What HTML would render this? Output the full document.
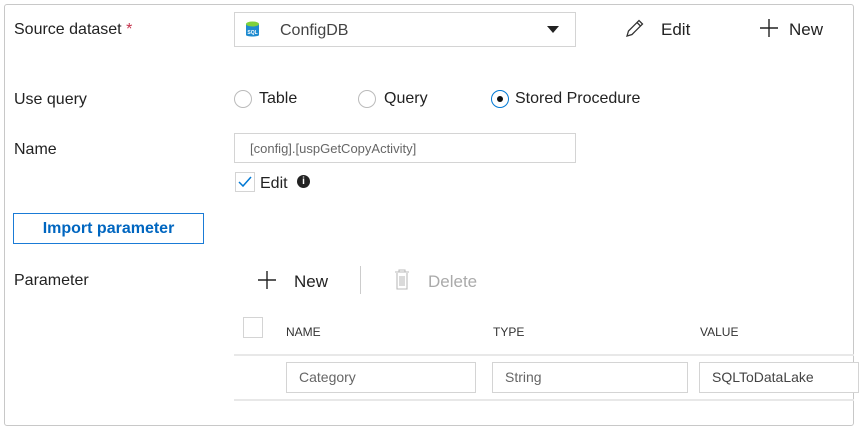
<!DOCTYPE html>
<html><head><style>
body{margin:0;width:861px;height:407px;background:#fff;font-family:"Liberation Sans",sans-serif;color:#222;position:relative;overflow:hidden}
.a{position:absolute;white-space:nowrap}
.frame{position:absolute;left:4px;top:4px;width:848px;height:420px;border:1px solid #c8c8c8;border-radius:3px}
.lbl{font-size:16px;line-height:20px}
.box{position:absolute;border:1px solid #d4d4d4;background:#fff;box-sizing:border-box}
.radio{position:absolute;width:18px;height:18px;border:1px solid #bbb;border-radius:50%;box-sizing:border-box}
.hdr{font-size:12px;color:#333}
.cell{font-size:14px;color:#666;padding-left:12px;line-height:29px}
</style></head><body>
<div class="frame"></div>
<div class="a lbl" style="left:14px;top:20px">Source dataset <span style="color:#c4314b">*</span></div>
<div class="box" style="left:234px;top:12px;width:342px;height:35px"></div>
<svg class="a" style="left:245px;top:20px" width="15" height="19" viewBox="0 0 15 19"><path d="M1 4v11c0 2 13 2 13 0V4z" fill="#1e8bd0"/><ellipse cx="7.5" cy="4" rx="6.5" ry="2.5" fill="#7fd13b"/><text x="7.5" y="14" font-size="5" fill="#fff" text-anchor="middle" font-family="Liberation Sans" font-weight="bold">SQL</text></svg>
<div class="a lbl" style="left:280px;top:21px;color:#444">ConfigDB</div>
<svg class="a" style="left:547px;top:26px" width="12" height="7"><path d="M0 0h12L6 7z" fill="#222"/></svg>
<svg class="a" style="left:624px;top:17px" width="22" height="22" viewBox="0 0 22 22"><path d="M3 19l1.5-5L15 3.5l3.5 3.5L8 17.5zM13 5.5l3.5 3.5" fill="none" stroke="#333" stroke-width="1.3"/></svg>
<div class="a lbl" style="left:661px;top:20px;font-size:17px">Edit</div>
<svg class="a" style="left:759px;top:18px" width="20" height="20"><path d="M10 1v18M1 10h18" stroke="#222" stroke-width="1.4"/></svg>
<div class="a lbl" style="left:789px;top:20px;font-size:17px">New</div>

<div class="a lbl" style="left:14px;top:90px">Use query</div>
<div class="radio" style="left:234px;top:90px"></div>
<div class="a lbl" style="left:259px;top:89px">Table</div>
<div class="radio" style="left:358px;top:90px"></div>
<div class="a lbl" style="left:384px;top:89px">Query</div>
<div class="radio" style="left:491px;top:90px;border-color:#0078d4"></div>
<div class="a" style="left:497px;top:96px;width:6px;height:6px;border-radius:50%;background:#111"></div>
<div class="a lbl" style="left:515px;top:89px">Stored Procedure</div>

<div class="a lbl" style="left:14px;top:140px">Name</div>
<div class="box" style="left:234px;top:133px;width:342px;height:30px"></div>
<div class="a" style="left:250px;top:141px;font-size:13px;color:#666">[config].[uspGetCopyActivity]</div>
<div class="box" style="left:235px;top:172px;width:20px;height:20px"></div>
<svg class="a" style="left:238px;top:176px" width="14" height="12"><path d="M1 6l4 4 8-9" fill="none" stroke="#0078d4" stroke-width="1.5"/></svg>
<div class="a lbl" style="left:260px;top:174px">Edit</div>
<div class="a" style="left:297px;top:175px;width:13px;height:13px;border-radius:50%;background:#222;color:#fff;font-size:10px;font-weight:bold;text-align:center;line-height:13px">i</div>

<div class="a" style="left:13px;top:213px;width:191px;height:31px;border:1px solid #1a7bd6;box-sizing:border-box;color:#0066c0;font-weight:bold;font-size:16px;text-align:center;line-height:30px">Import parameter</div>

<div class="a lbl" style="left:14px;top:271px">Parameter</div>
<svg class="a" style="left:257px;top:270px" width="20" height="20"><path d="M10 1v18M1 10h18" stroke="#222" stroke-width="1.4"/></svg>
<div class="a lbl" style="left:294px;top:272px;font-size:17px">New</div>
<div class="a" style="left:360px;top:266px;width:1px;height:28px;background:#ccc"></div>
<svg class="a" style="left:394px;top:269px" width="16" height="22" viewBox="0 0 16 22"><path d="M1 3h14M5 3V1h6v2M3 4v16h10V4M6 7v10M8 7v10M10 7v10" fill="none" stroke="#bbb" stroke-width="1.1"/></svg>
<div class="a lbl" style="left:428px;top:272px;color:#aaa;font-size:17px">Delete</div>

<div class="box" style="left:243px;top:317px;width:20px;height:21px"></div>
<div class="a hdr" style="left:286px;top:325px">NAME</div>
<div class="a hdr" style="left:493px;top:325px">TYPE</div>
<div class="a hdr" style="left:700px;top:325px">VALUE</div>
<div class="a" style="left:234px;top:354px;width:620px;height:2px;background:#e8e8e8"></div>
<div class="box cell" style="left:286px;top:362px;width:190px;height:31px">Category</div>
<div class="box cell" style="left:492px;top:362px;width:196px;height:31px">String</div>
<div class="box cell" style="left:699px;top:362px;width:160px;height:31px;color:#444">SQLToDataLake</div>
<div class="a" style="left:234px;top:399px;width:620px;height:2px;background:#e8e8e8"></div>
</body></html>
